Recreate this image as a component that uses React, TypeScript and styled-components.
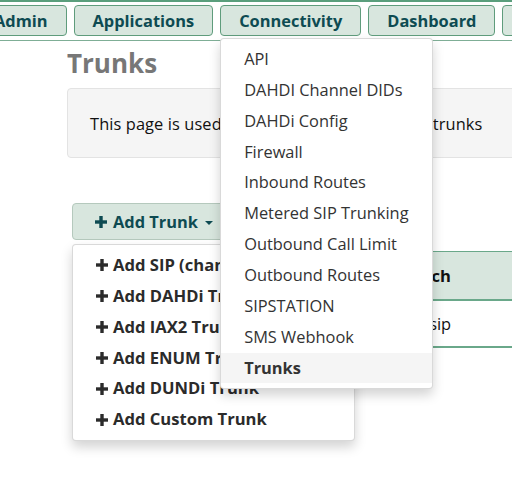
import React from 'react';
import styled, { createGlobalStyle } from 'styled-components';

const GlobalStyle = createGlobalStyle`
    body {
        margin: 0;
        font-family: "Open Sans", "Noto Sans", sans-serif;
        background: #ffffff;
        overflow: hidden;
    }
`;

const navItems = ['Admin', 'Applications', 'Connectivity', 'Dashboard', 'Reports'];

const connectivityItems = [
    'API',
    'DAHDI Channel DIDs',
    'DAHDi Config',
    'Firewall',
    'Inbound Routes',
    'Metered SIP Trunking',
    'Outbound Call Limit',
    'Outbound Routes',
    'SIPSTATION',
    'SMS Webhook',
    'Trunks',
];

const trunkItems = [
    'Add SIP (chan_pjsip) Trunk',
    'Add DAHDi Trunk',
    'Add IAX2 Trunk',
    'Add ENUM Trunk',
    'Add DUNDi Trunk',
    'Add Custom Trunk',
];

const PlusIcon: React.FC<{ color: string }> = ({ color }) => (
    <PlusSvg viewBox="0 0 12 12">
        <rect x="4.3" y="0" width="3.4" height="12" fill={color} />
        <rect x="0" y="4.3" width="12" height="3.4" fill={color} />
    </PlusSvg>
);

export default function App() {
    return (
        <Page>
            <GlobalStyle />
            <NavBar>
                <NavTrack>
                    {navItems.map((item) => (
                        <NavSlot key={item}>
                            <NavButton>{item}</NavButton>
                            {item === 'Connectivity' && (
                                <TopMenu>
                                    {connectivityItems.map((entry) => (
                                        <TopMenuItem key={entry} active={entry === 'Trunks'}>
                                            {entry}
                                        </TopMenuItem>
                                    ))}
                                </TopMenu>
                            )}
                        </NavSlot>
                    ))}
                </NavTrack>
            </NavBar>

            <Content>
                <Title>Trunks</Title>
                <Well>This page is used to manage various system trunks</Well>

                <Inner>
                    <ToolbarSlot>
                        <AddButton>
                            <PlusIcon color="#0e4b52" />
                            Add Trunk
                            <Caret />
                        </AddButton>
                        <TrunkMenu>
                            {trunkItems.map((entry) => (
                                <TrunkMenuItem key={entry}>
                                    <PlusIcon color="#2b2b2b" />
                                    {entry}
                                </TrunkMenuItem>
                            ))}
                        </TrunkMenu>
                    </ToolbarSlot>

                    <Table>
                        <HeadRow>
                            <HeadCell>Trunk Name</HeadCell>
                            <HeadCell>Tech</HeadCell>
                            <HeadCell>CallerID</HeadCell>
                        </HeadRow>
                        <BodyRow>
                            <BodyCell>provider-trunk</BodyCell>
                            <BodyCell>pjsip</BodyCell>
                            <BodyCell />
                        </BodyRow>
                    </Table>
                </Inner>
            </Content>
        </Page>
    );
}

const Page = styled.div`
    width: 512px;
    height: 500px;
    position: relative;
    overflow: hidden;
`;

const NavBar = styled.div`
    border-top: 2px solid #5a9e7c;
    border-bottom: 1px solid #7fae96;
    padding: 3px 0 4px;
    position: relative;
    z-index: 20;
`;

const NavTrack = styled.div`
    display: flex;
    gap: 7px;
    margin-left: -25px;
`;

const NavSlot = styled.div`
    position: relative;
    flex-shrink: 0;
`;

const NavButton = styled.div`
    height: 29px;
    line-height: 29px;
    padding: 0 18px;
    background: #d8e6de;
    border: 1px solid #5f9c7c;
    border-radius: 4px;
    color: #0e4b52;
    font-size: 16.4px;
    font-weight: 700;
    white-space: nowrap;
`;

const TopMenu = styled.div`
    position: absolute;
    top: calc(100% + 2px);
    left: 0;
    width: 213px;
    box-sizing: border-box;
    padding: 5px 0;
    background: #ffffff;
    border: 1px solid rgba(0, 0, 0, 0.15);
    border-radius: 4px;
    box-shadow: 0 6px 12px rgba(0, 0, 0, 0.175);
`;

const TopMenuItem = styled.div<{ active?: boolean }>`
    padding: 4px 23px;
    font-size: 16.4px;
    line-height: 22.86px;
    color: #333333;
    white-space: nowrap;
    font-weight: ${(p) => (p.active ? 700 : 400)};
    background: ${(p) => (p.active ? '#f5f5f5' : 'transparent')};
`;

const Content = styled.div`
    padding: 0 0 0 67px;
`;

const Title = styled.h1`
    margin: 6px 0 9px;
    font-size: 26px;
    line-height: 32px;
    font-weight: 700;
    color: #777777;
`;

const Well = styled.div`
    height: 70px;
    box-sizing: border-box;
    padding: 24px 22px;
    width: 500px;
    background: #f5f5f5;
    border: 1px solid #e3e3e3;
    border-radius: 4px;
    font-size: 16.4px;
    line-height: 22px;
    letter-spacing: 0.1px;
    color: #111111;
    white-space: nowrap;
`;

const Inner = styled.div`
    padding: 45px 0 0 5px;
`;

const ToolbarSlot = styled.div`
    position: relative;
    z-index: 10;
    width: fit-content;
`;

const AddButton = styled.div`
    display: flex;
    align-items: center;
    gap: 3px;
    height: 35px;
    padding: 0 22px;
    background: #d8e6de;
    border: 1px solid #b5c9bd;
    border-radius: 4px;
    color: #0e4b52;
    font-size: 16.4px;
    font-weight: 700;
    white-space: nowrap;
`;

const Caret = styled.span`
    width: 0;
    height: 0;
    margin-left: 4px;
    margin-top: 2px;
    border-top: 4px solid #0e4b52;
    border-left: 4px solid transparent;
    border-right: 4px solid transparent;
`;

const PlusSvg = styled.svg`
    width: 12px;
    height: 12px;
    flex-shrink: 0;
    margin-right: 3px;
`;

const TrunkMenu = styled.div`
    position: absolute;
    top: calc(100% + 4px);
    left: 0;
    width: 283px;
    box-sizing: border-box;
    padding: 5px 0;
    background: #ffffff;
    border: 1px solid rgba(0, 0, 0, 0.15);
    border-radius: 4px;
    box-shadow: 0 6px 12px rgba(0, 0, 0, 0.175);
`;

const TrunkMenuItem = styled.div`
    display: flex;
    align-items: center;
    gap: 2px;
    padding: 4px 23px;
    font-size: 16.6px;
    line-height: 22.86px;
    font-weight: 700;
    color: #2b2b2b;
    white-space: nowrap;
`;

const Table = styled.div`
    margin-top: 11px;
    width: 500px;
    border-left: 2px solid #2d6b4f;
`;

const HeadRow = styled.div`
    display: grid;
    grid-template-columns: 333px 120px 1fr;
    height: 47px;
    align-items: center;
    background: #d8e6de;
    border-top: 1px solid #6aa88a;
    border-bottom: 2px solid #6aa88a;
`;

const BodyRow = styled.div`
    display: grid;
    grid-template-columns: 333px 120px 1fr;
    height: 45px;
    align-items: center;
    border-bottom: 2px solid #6aa88a;
`;

const HeadCell = styled.div`
    padding: 0 5px;
    font-size: 16.6px;
    font-weight: 700;
    color: #111111;
    white-space: nowrap;
`;

const BodyCell = styled.div`
    padding: 0 8px;
    font-size: 16.4px;
    color: #111111;
    white-space: nowrap;
`;
